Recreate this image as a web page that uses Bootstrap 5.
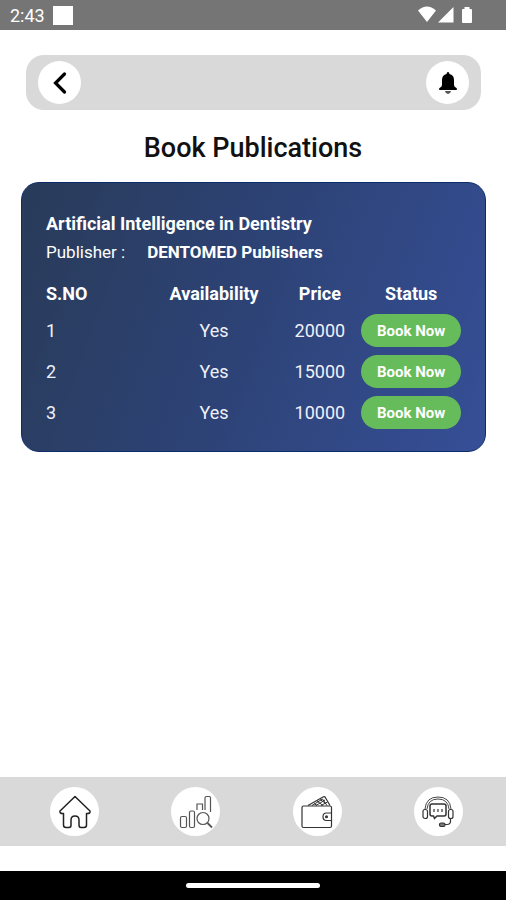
<!DOCTYPE html>
<html lang="en">
<head>
<meta charset="utf-8">
<meta name="viewport" content="width=device-width, initial-scale=1">
<title>Book Publications</title>
<link href="https://cdn.jsdelivr.net/npm/bootstrap@5.3.0/dist/css/bootstrap.min.css" rel="stylesheet">
<style>
body { font-family: Roboto, "Liberation Sans", sans-serif; font-size: 18px; color: #111; }
.status-bar { height: 30px; background: #757575; font-size: 18px; padding: 0 32px 0 10px; }
.notice-square { width: 20px; height: 19px; background: #fff; }
.top-bar { margin: 25px 25px 0 26px; padding: 6px 12px; background: #d9d9d9; border-radius: 18px; }
.round-btn { width: 43px; height: 43px; background: #fff; border-radius: 50%; color: #000; }
.page-title { font-size: 27px; line-height: 36px; font-weight: 500; margin: 20px 0 16px; color: #111; }
.book-card { margin: 0 20px 0 21px; padding: 27px 24px 18px; border: 1px solid #0d2c6b; border-radius: 18px; color: #fff;
  background: linear-gradient(110deg, #293b59 0%, #2d4377 50%, #364f97 100%); }
.book-line { font-size: 18px; line-height: 28px; }
.publisher-line { font-size: 17px; line-height: 28px; gap: 22px; }
.book-table { table-layout: fixed; margin-top: 11px; line-height: 24px; }
.book-table th { height: 33px; padding: 0; font-weight: 700; }
.book-table td { height: 41px; padding: 0; color: #eef1fa; }
.col-no { width: 25%; }
.col-avail { width: 31%; }
.col-price { width: 20%; }
.book-btn { height: 33px; padding: 0; background: #66bb5a; color: #fff; font-size: 15px; line-height: 24px; font-weight: 700; border: 0; }
.book-btn:hover { background: #58a84d; color: #fff; }
.tab-bar { background: #d9d9d9; padding: 10px 43px 10px 50px; margin-bottom: 25px; }
.tab-link { width: 49px; height: 49px; background: #fff; border-radius: 50%; color: #222; }
.gesture-bar { height: 29px; background: #000; }
.gesture-pill { width: 134px; height: 5px; background: #fff; border-radius: 3px; }
</style>
<script src="https://cdn.jsdelivr.net/npm/bootstrap@5.3.0/dist/js/bootstrap.bundle.min.js"></script>
</head>
<body class="bg-white">
<div class="d-flex flex-column min-vh-100">
  <div class="status-bar d-flex align-items-center justify-content-between text-white">
    <div class="d-flex align-items-center gap-2"><span>2:43</span><span class="notice-square"></span></div>
    <svg width="56" height="18" viewBox="0 0 56 18" fill="#fff" aria-hidden="true">
      <path d="M0 4.500Q9 -3.500 18 4.500L9 16ZM35.500 1V16.500H20ZM44 4Q44 3 45 3H46.500V1H51.500V3H53Q54 3 54 4V16Q54 17 53 17H45Q44 17 44 16Z"/>
    </svg>
  </div>

  <header class="top-bar d-flex justify-content-between">
    <button type="button" class="round-btn btn border-0 p-0 d-flex align-items-center justify-content-center" aria-label="Back">
      <svg width="24" height="24" viewBox="0 0 24 24" fill="none" stroke="#000" stroke-width="3.200" stroke-linecap="round" stroke-linejoin="miter"><path d="M16.500 3L7.500 12L16.500 21"/></svg>
    </button>
    <button type="button" class="round-btn btn border-0 p-0 d-flex align-items-center justify-content-center" aria-label="Notifications">
      <svg width="20" height="24" viewBox="0 0 20 24"><path d="M10 1Q11.400 1 11.400 3Q16 4.200 16 9V14Q16 15.800 18.800 17.200V19H1.200V17.200Q4 15.800 4 14V9Q4 4.200 8.600 3Q8.600 1 10 1Z"/><path d="M7 20H13Q12.500 22.800 10 23Q7.500 22.800 7 20Z" fill="#555"/></svg>
    </button>
  </header>

  <main class="flex-grow-1">
    <h1 class="page-title text-center">Book Publications</h1>
    <section class="book-card">
      <div class="book-line fw-bold">Artificial Intelligence in Dentistry</div>
      <div class="publisher-line d-flex"><span>Publisher :</span><strong>DENTOMED Publishers</strong></div>
      <table class="book-table w-100 text-center align-middle">
        <thead>
          <tr><th class="col-no text-start" scope="col">S.NO</th><th class="col-avail" scope="col">Availability</th><th class="col-price" scope="col">Price</th><th scope="col">Status</th></tr>
        </thead>
        <tbody>
          <tr><td class="text-start">1</td><td>Yes</td><td>20000</td><td><button type="button" class="btn book-btn rounded-pill w-100 d-block">Book Now</button></td></tr>
          <tr><td class="text-start">2</td><td>Yes</td><td>15000</td><td><button type="button" class="btn book-btn rounded-pill w-100 d-block">Book Now</button></td></tr>
          <tr><td class="text-start">3</td><td>Yes</td><td>10000</td><td><button type="button" class="btn book-btn rounded-pill w-100 d-block">Book Now</button></td></tr>
        </tbody>
      </table>
    </section>
  </main>

  <nav class="tab-bar d-flex justify-content-between" aria-label="Main">
    <a href="#home" class="tab-link d-flex align-items-center justify-content-center" aria-label="Home">
      <svg width="34" height="34" viewBox="0 0 34 34" fill="none" stroke="currentColor" stroke-width="1.500" stroke-linejoin="round"><path d="M17 1.500L32 16Q32.500 18.500 29.500 18.500H28.500V30Q28.500 32.500 26 32.500H23Q21 32.500 21 30V25Q21 21 17 21Q13 21 13 25V30Q13 32.500 11 32.500H8Q5.500 32.500 5.500 30V18.500H4.500Q1.500 18.500 2 16Z"/></svg>
    </a>
    <a href="#reports" class="tab-link d-flex align-items-center justify-content-center" aria-label="Reports">
      <svg width="34" height="34" viewBox="0 0 34 34" fill="none" stroke="#555" stroke-width="1.200"><rect x="1.500" y="21.500" width="6" height="11" rx="1.500"/><rect x="10.500" y="16" width="5" height="16.500" rx="1.500"/><path d="M18 15V9H23.500V15M26 15V3Q26 1.500 27.500 1.500H30.500Q31.500 1.500 31.500 3V17"/><circle cx="24" cy="23.500" r="6"/><path d="M28.500 28L33 32.500" stroke-width="1.800"/></svg>
    </a>
    <a href="#wallet" class="tab-link d-flex align-items-center justify-content-center" aria-label="Wallet">
      <svg width="34" height="34" viewBox="0 0 34 34" fill="none" stroke="#333" stroke-width="1.200"><path d="M31.500 18V12.500Q31.500 11 30 11H3.500Q2 11 2 12.500V31Q2 32.500 3.500 32.500H30Q31.500 32.500 31.500 31V25.500M32 18H26.500Q23 18 23 21.800Q23 25.500 26.500 25.500H32M31.500 18V25.500"/><circle cx="26.500" cy="21.800" r=".9" fill="#333"/><path d="M8 10.500L23 2Q24.500 1.200 25.500 2.700L30 10.500"/><path d="M12 10.500L22.500 4L27 10.500M14 8.500L17 10.500M17 6L23 10.500M20 4.500L26 8.500M16 10.500L25 5M21 10.500L27.500 7" stroke-width="1"/></svg>
    </a>
    <a href="#support" class="tab-link d-flex align-items-center justify-content-center" aria-label="Support">
      <svg width="34" height="34" viewBox="0 0 34 34" fill="none" stroke="#333" stroke-width="1.200"><path d="M4 14Q5 2 17 2Q29 2 30 14M6 14Q7 4 17 4Q27 4 28 14" stroke-width=".9"/><rect x="2" y="14.500" width="4.500" height="9" rx="2"/><rect x="27.500" y="14.500" width="4.500" height="9" rx="2"/><path d="M11 9H23Q25 9 25 11V19Q25 21 23 21H16L13.500 23.500L12.500 21H11Q9 21 9 19V11Q9 9 11 9Z" stroke-width="1.500"/><path d="M13 14V17M17 14V17M21 14V17M29.500 24V26Q29.500 29.500 26 29.500H24"/><rect x="18.500" y="28" width="5.500" height="3.500" rx="1.500" fill="#777"/></svg>
    </a>
  </nav>
  <div class="gesture-bar d-flex align-items-center justify-content-center"><div class="gesture-pill"></div></div>
</div>
</body>
</html>
